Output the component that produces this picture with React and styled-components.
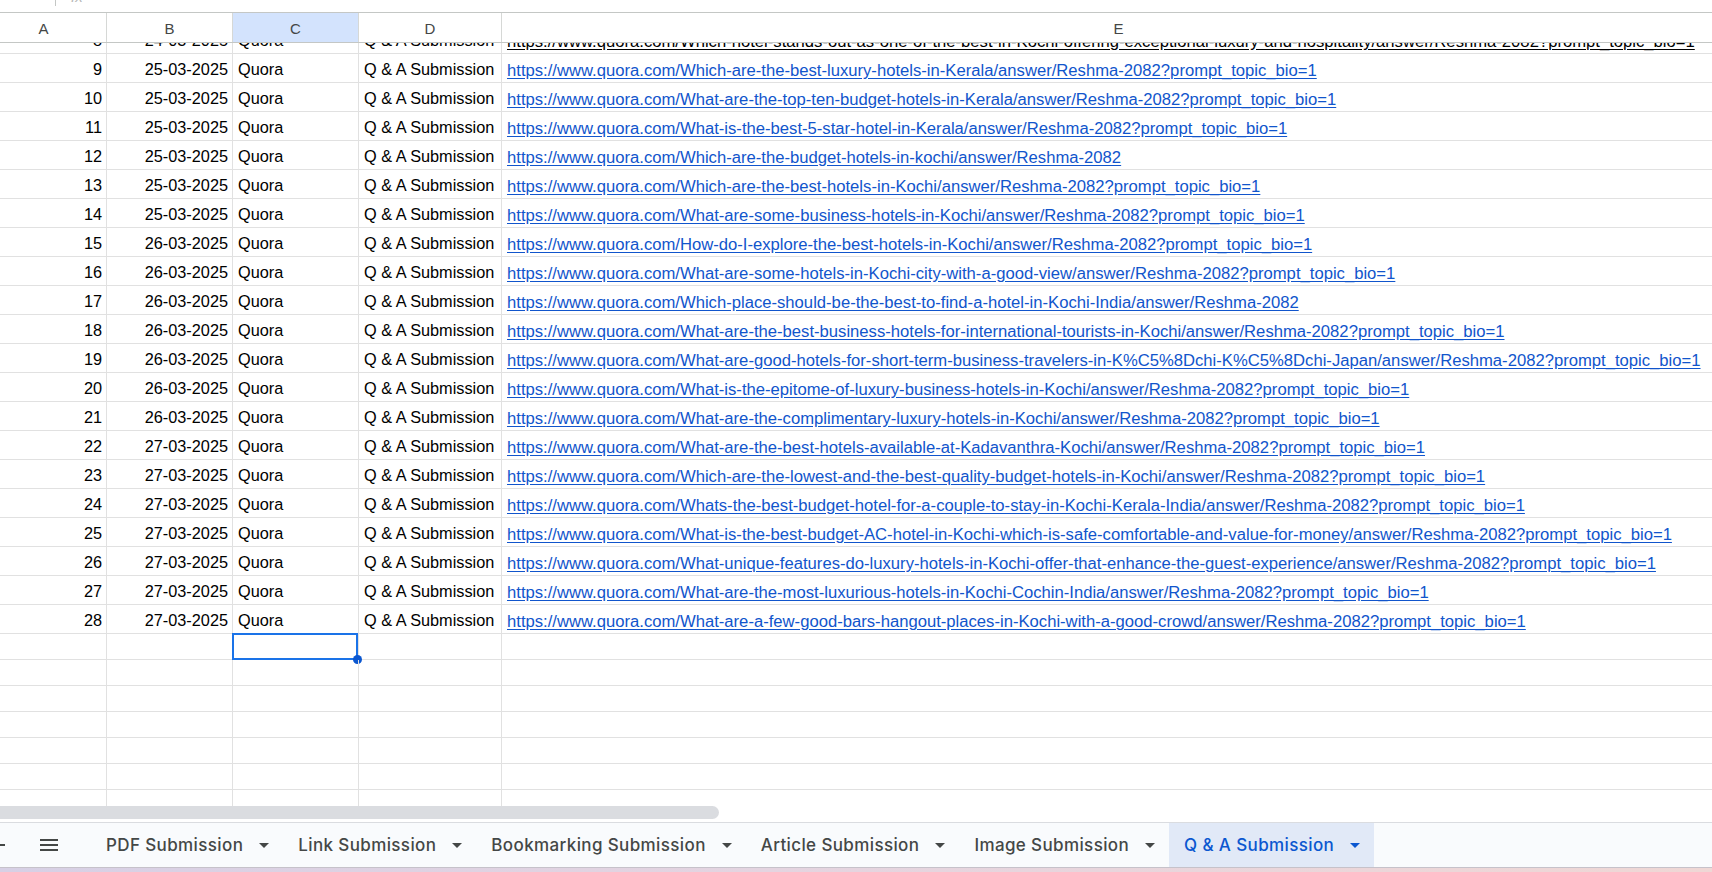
import React from "react";
import styled, { createGlobalStyle } from "styled-components";

const GlobalStyle = createGlobalStyle`
	html, body {
		margin: 0;
		padding: 0;
		overflow: hidden;
		background: #ffffff;
	}
	* {
		box-sizing: border-box;
	}
`;

const Q = "https://www.quora.com/";

// Sheet rows as seen in the screenshot (row 8 is half hidden under the header)
const rows = [
	{ n: 8, date: "24-03-2025", plain: true, link: "Which-hotel-stands-out-as-one-of-the-best-in-Kochi-offering-exceptional-luxury-and-hospitality/answer/Reshma-2082?prompt_topic_bio=1" },
	{ n: 9, date: "25-03-2025", link: "Which-are-the-best-luxury-hotels-in-Kerala/answer/Reshma-2082?prompt_topic_bio=1" },
	{ n: 10, date: "25-03-2025", link: "What-are-the-top-ten-budget-hotels-in-Kerala/answer/Reshma-2082?prompt_topic_bio=1" },
	{ n: 11, date: "25-03-2025", link: "What-is-the-best-5-star-hotel-in-Kerala/answer/Reshma-2082?prompt_topic_bio=1" },
	{ n: 12, date: "25-03-2025", link: "Which-are-the-budget-hotels-in-kochi/answer/Reshma-2082" },
	{ n: 13, date: "25-03-2025", link: "Which-are-the-best-hotels-in-Kochi/answer/Reshma-2082?prompt_topic_bio=1" },
	{ n: 14, date: "25-03-2025", link: "What-are-some-business-hotels-in-Kochi/answer/Reshma-2082?prompt_topic_bio=1" },
	{ n: 15, date: "26-03-2025", link: "How-do-I-explore-the-best-hotels-in-Kochi/answer/Reshma-2082?prompt_topic_bio=1" },
	{ n: 16, date: "26-03-2025", link: "What-are-some-hotels-in-Kochi-city-with-a-good-view/answer/Reshma-2082?prompt_topic_bio=1" },
	{ n: 17, date: "26-03-2025", link: "Which-place-should-be-the-best-to-find-a-hotel-in-Kochi-India/answer/Reshma-2082" },
	{ n: 18, date: "26-03-2025", link: "What-are-the-best-business-hotels-for-international-tourists-in-Kochi/answer/Reshma-2082?prompt_topic_bio=1" },
	{ n: 19, date: "26-03-2025", link: "What-are-good-hotels-for-short-term-business-travelers-in-K%C5%8Dchi-K%C5%8Dchi-Japan/answer/Reshma-2082?prompt_topic_bio=1" },
	{ n: 20, date: "26-03-2025", link: "What-is-the-epitome-of-luxury-business-hotels-in-Kochi/answer/Reshma-2082?prompt_topic_bio=1" },
	{ n: 21, date: "26-03-2025", link: "What-are-the-complimentary-luxury-hotels-in-Kochi/answer/Reshma-2082?prompt_topic_bio=1" },
	{ n: 22, date: "27-03-2025", link: "What-are-the-best-hotels-available-at-Kadavanthra-Kochi/answer/Reshma-2082?prompt_topic_bio=1" },
	{ n: 23, date: "27-03-2025", link: "Which-are-the-lowest-and-the-best-quality-budget-hotels-in-Kochi/answer/Reshma-2082?prompt_topic_bio=1" },
	{ n: 24, date: "27-03-2025", link: "Whats-the-best-budget-hotel-for-a-couple-to-stay-in-Kochi-Kerala-India/answer/Reshma-2082?prompt_topic_bio=1" },
	{ n: 25, date: "27-03-2025", link: "What-is-the-best-budget-AC-hotel-in-Kochi-which-is-safe-comfortable-and-value-for-money/answer/Reshma-2082?prompt_topic_bio=1" },
	{ n: 26, date: "27-03-2025", link: "What-unique-features-do-luxury-hotels-in-Kochi-offer-that-enhance-the-guest-experience/answer/Reshma-2082?prompt_topic_bio=1" },
	{ n: 27, date: "27-03-2025", link: "What-are-the-most-luxurious-hotels-in-Kochi-Cochin-India/answer/Reshma-2082?prompt_topic_bio=1" },
	{ n: 28, date: "27-03-2025", link: "What-are-a-few-good-bars-hangout-places-in-Kochi-with-a-good-crowd/answer/Reshma-2082?prompt_topic_bio=1" },
];

const columns = [
	{ key: "A", width: 126 },
	{ key: "B", width: 126 },
	{ key: "C", width: 126, selected: true },
	{ key: "D", width: 143 },
	{ key: "E", width: 1234 },
];

const tabs = [
	"PDF Submission",
	"Link Submission",
	"Bookmarking Submission",
	"Article Submission",
	"Image Submission",
	"Q & A Submission",
];

const Screen = styled.div`
	width: 1712px;
	height: 872px;
	display: flex;
	flex-direction: column;
	overflow: hidden;
	font-family: "Liberation Sans", Arial, sans-serif;
`;

const FormulaStrip = styled.div`
	height: 12px;
	flex: none;
	display: flex;
	align-items: flex-start;
	overflow: hidden;
	background: #ffffff;
`;

const StripDivider = styled.div`
	width: 1px;
	height: 6px;
	margin-left: 55px;
	background: #c4c7c5;
`;

const FxHint = styled.span`
	margin-left: 15px;
	margin-top: -12px;
	font-size: 15px;
	font-style: italic;
	color: #b8b8b8;
`;

const Grid = styled.div`
	flex: 1;
	overflow: hidden;
	margin-left: -19px;
`;

const HeaderRow = styled.div`
	display: flex;
	height: 31px;
	border-top: 1px solid #c4c7c5;
	border-bottom: 1px solid #c4c7c5;
`;

const HeaderCell = styled.div`
	flex: none;
	width: ${(p) => p.$width}px;
	display: flex;
	align-items: center;
	justify-content: center;
	padding-top: 1px;
	border-right: 1px solid #d6d8d6;
	background: ${(p) => (p.$selected ? "#d3e3fd" : "#ffffff")};
	color: #444746;
	font-size: 15px;
`;

const Row = styled.div`
	display: flex;
	height: ${(p) => p.$height}px;
	border-bottom: 1px solid #e1e1e1;
`;

const Cell = styled.div`
	position: relative;
	flex: none;
	width: ${(p) => p.$width}px;
	display: flex;
	align-items: flex-end;
	justify-content: ${(p) => (p.$right ? "flex-end" : "flex-start")};
	padding: 0 4px 4px 5px;
	border-right: 1px solid #e1e1e1;
	overflow: ${(p) => (p.$open ? "visible" : "hidden")};
	white-space: nowrap;
	font-size: 16.3px;
	line-height: 18px;
	color: #000000;
`;

const LinkText = styled.span`
	position: relative;
	top: 2px;
	font-size: 16.65px;
	color: ${(p) => (p.$plain ? "#000000" : "#1155cc")};
	text-decoration: underline;
	text-underline-offset: 2px;
`;

const SelectionFrame = styled.div`
	position: absolute;
	top: -1px;
	left: -1px;
	right: 0;
	bottom: -1px;
	border: 2px solid #1a73e8;
`;

const FillHandle = styled.div`
	position: absolute;
	right: -6px;
	bottom: -6px;
	width: 9px;
	height: 9px;
	border-radius: 50%;
	background: #0b57d0;
`;

const ScrollTrack = styled.div`
	height: 16px;
	flex: none;
	background: #ffffff;
`;

const ScrollThumb = styled.div`
	width: 719px;
	height: 13px;
	background: #dadce0;
	border-radius: 0 7px 7px 0;
`;

const TabBar = styled.div`
	height: 45px;
	flex: none;
	display: flex;
	align-items: stretch;
	border-top: 1px solid #dadce0;
	background: #f9fbfd;
	font-family: Inter, "Open Sans", sans-serif;
`;

const IconButton = styled.div`
	flex: none;
	width: ${(p) => p.$width || 40}px;
	display: flex;
	align-items: center;
	justify-content: center;
	margin-left: ${(p) => p.$offset || 0}px;
	color: #444746;
`;

const Tab = styled.div`
	flex: none;
	display: flex;
	align-items: center;
	gap: 16px;
	padding: 0 14px 0 15px;
	font-size: 17px;
	font-weight: 500;
	letter-spacing: 0.38px;
	color: ${(p) => (p.$active ? "#0b57d0" : "#444746")};
	background: ${(p) => (p.$active ? "#e1e9f7" : "transparent")};
`;

const DesktopStrip = styled.div`
	height: 5px;
	flex: none;
	border-top: 1px solid #c6c2ca;
	background: linear-gradient(90deg, #d7d0e5 0%, #e4d4e0 45%, #efd7d5 100%);
`;

const Caret = ({ color }) => (
	<svg width="10" height="5" viewBox="0 0 10 5">
		<path d="M0 0 L10 0 L5 5 Z" fill={color} />
	</svg>
);

const MenuGlyph = () => (
	<svg width="18" height="12" viewBox="0 0 18 12">
		<path d="M0 1 H18 M0 6 H18 M0 11 H18" stroke="currentColor" strokeWidth="2" />
	</svg>
);

const PlusGlyph = () => (
	<svg width="16" height="16" viewBox="0 0 16 16">
		<path d="M8 1 V15 M1 8 H15" stroke="currentColor" strokeWidth="2" />
	</svg>
);

const DataRow = ({ row }) => (
	<Row $height={row.n === 8 ? 11 : 29}>
		<Cell $width={126} $right>{row.n}</Cell>
		<Cell $width={126} $right>{row.date}</Cell>
		<Cell $width={126}>Quora</Cell>
		<Cell $width={143}>Q &amp; A Submission</Cell>
		<Cell $width={1234}>
			<LinkText $plain={row.plain}>{Q + row.link}</LinkText>
		</Cell>
	</Row>
);

const EmptyRow = ({ selected }) => (
	<Row $height={26}>
		{columns.map((col) => {
			const active = selected && col.selected;
			return (
				<Cell key={col.key} $width={col.width} $open={active}>
					{active && (
						<SelectionFrame>
							<FillHandle />
						</SelectionFrame>
					)}
				</Cell>
			);
		})}
	</Row>
);

const App = () => {
	return (
		<>
			<GlobalStyle />
			<Screen>
				<FormulaStrip>
					<StripDivider />
					<FxHint>fx</FxHint>
				</FormulaStrip>

				<Grid>
					<HeaderRow>
						{columns.map((col) => (
							<HeaderCell key={col.key} $width={col.width} $selected={col.selected}>
								{col.key}
							</HeaderCell>
						))}
					</HeaderRow>
					{rows.map((row) => (
						<DataRow key={row.n} row={row} />
					))}
					{Array.from({ length: 8 }).map((_, i) => (
						<EmptyRow key={i} selected={i === 0} />
					))}
				</Grid>

				<ScrollTrack>
					<ScrollThumb />
				</ScrollTrack>

				<TabBar>
					<IconButton $offset={-22}>
						<PlusGlyph />
					</IconButton>
					<IconButton $offset={11}>
						<MenuGlyph />
					</IconButton>
					<IconButton $width={22} />
					{tabs.map((name) => {
						const active = name === "Q & A Submission";
						return (
							<Tab key={name} $active={active}>
								{name}
								<Caret color={active ? "#0b57d0" : "#444746"} />
							</Tab>
						);
					})}
				</TabBar>
				<DesktopStrip />
			</Screen>
		</>
	);
};

export default App;
